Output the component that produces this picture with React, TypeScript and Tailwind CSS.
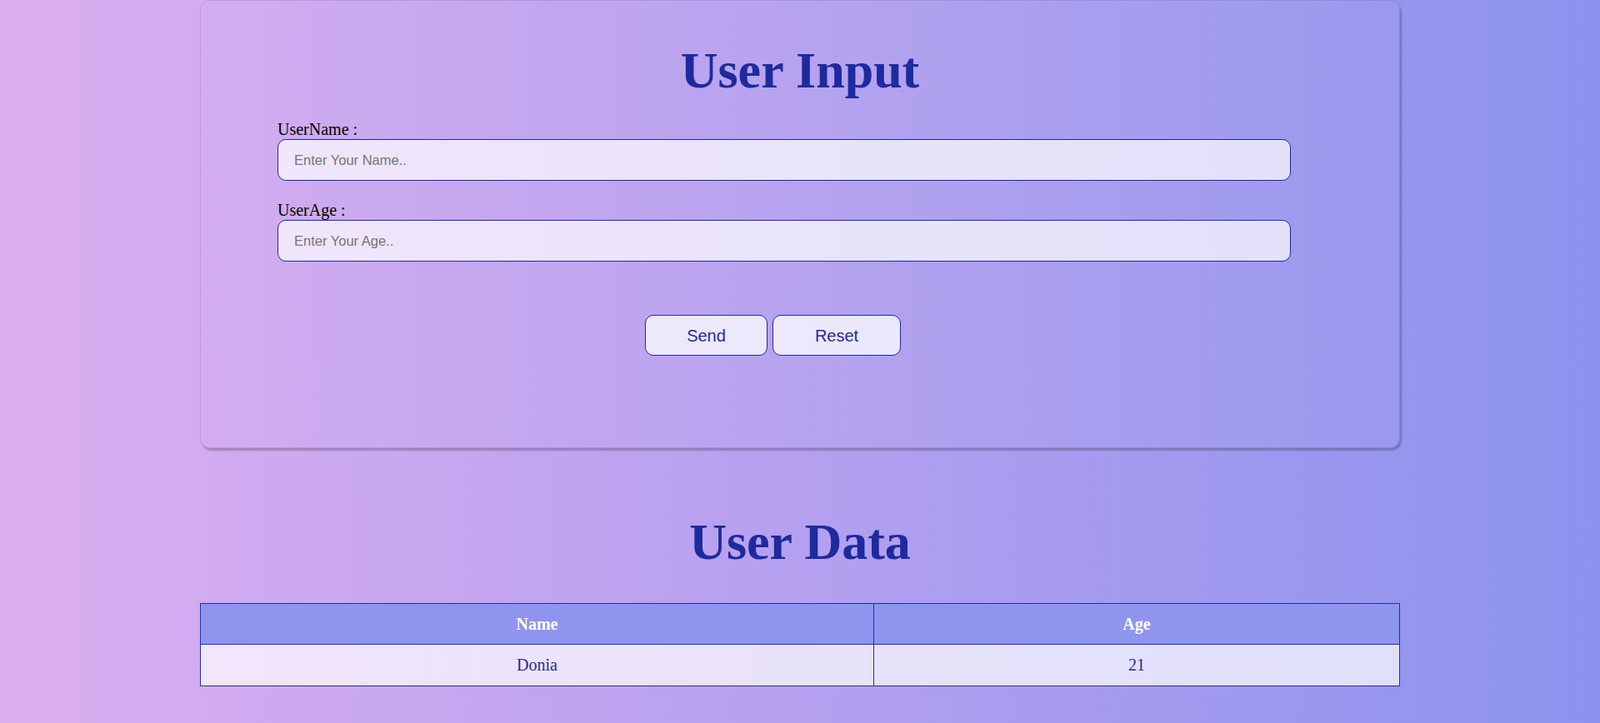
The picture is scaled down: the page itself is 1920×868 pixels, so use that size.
import { useState } from "react";

type User = { name: string; age: string };

export default function App() {
  const [name, setName] = useState("");
  const [age, setAge] = useState("");
  const [users, setUsers] = useState<User[]>([{ name: "Donia", age: "21" }]);

  const send = (e: React.FormEvent) => {
    e.preventDefault();
    if (!name || !age) return;
    setUsers([...users, { name, age }]);
    setName("");
    setAge("");
  };

  const reset = () => {
    setName("");
    setAge("");
  };

  return (
    <div className="min-h-screen bg-[linear-gradient(to_right,#dcaef0,#8c92ee)] pb-[45px] font-['Liberation_Serif',serif]">
      <div className="mx-auto w-3/4 rounded-[12px] border border-black/10 bg-white/[0.03] pt-[48px] pb-[110px] shadow-[2px_3px_2px_rgba(0,0,0,0.22)]">
        <h1 className="text-center text-[62px] font-bold leading-[70px] text-[#1e2a9e]">User Input</h1>
        <form className="mt-[24px] pl-[92px]" onSubmit={send}>
          <div>
            <label className="block text-[20px] leading-[24px] text-black">UserName :</label>
            <input
              value={name}
              onChange={(e) => setName(e.target.value)}
              placeholder="Enter Your Name.."
              className="h-[50px] w-[1216px] rounded-[10px] border border-[#1e2a9e] bg-white/70 px-[19px] font-['Liberation_Sans',sans-serif] text-[16.5px] text-black outline-none placeholder:text-[#757575]"
            />
          </div>
          <div className="mt-[23px]">
            <label className="block text-[20px] leading-[24px] text-black">UserAge :</label>
            <input
              value={age}
              onChange={(e) => setAge(e.target.value)}
              placeholder="Enter Your Age.."
              className="h-[50px] w-[1216px] rounded-[10px] border border-[#1e2a9e] bg-white/70 px-[19px] font-['Liberation_Sans',sans-serif] text-[16.5px] text-black outline-none placeholder:text-[#757575]"
            />
          </div>
          <div className="mt-[64px] flex w-[1189px] justify-center gap-[6px] font-['Liberation_Sans',sans-serif]">
            <button
              type="submit"
              className="h-[49px] w-[147px] rounded-[10px] border border-[#1e2a9e] bg-white/75 text-[20px] text-[#1e2a9e]"
            >
              Send
            </button>
            <button
              type="button"
              onClick={reset}
              className="h-[49px] w-[154px] rounded-[10px] border border-[#1e2a9e] bg-white/75 text-[20px] text-[#1e2a9e]"
            >
              Reset
            </button>
          </div>
        </form>
      </div>

      <h1 className="mt-[77px] text-center text-[62px] font-bold leading-[70px] text-[#1e2a9e]">User Data</h1>
      <table className="mx-auto mt-[39px] w-3/4 border-collapse text-[20px]">
        <thead>
          <tr className="bg-[#8f94ee]">
            <th className="w-[808px] border border-[#2230a6] py-[12px] leading-[24px] font-bold text-white">Name</th>
            <th className="border border-[#2230a6] py-[12px] leading-[24px] font-bold text-white">Age</th>
          </tr>
        </thead>
        <tbody>
          {users.map((u, i) => (
            <tr key={i} className="bg-white/70">
              <td className="border border-[#2230a6] py-[12px] text-center leading-[25px] text-[#1e2a9e]">{u.name}</td>
              <td className="border border-[#2230a6] py-[12px] text-center leading-[25px] text-[#1e2a9e]">{u.age}</td>
            </tr>
          ))}
        </tbody>
      </table>
    </div>
  );
}
